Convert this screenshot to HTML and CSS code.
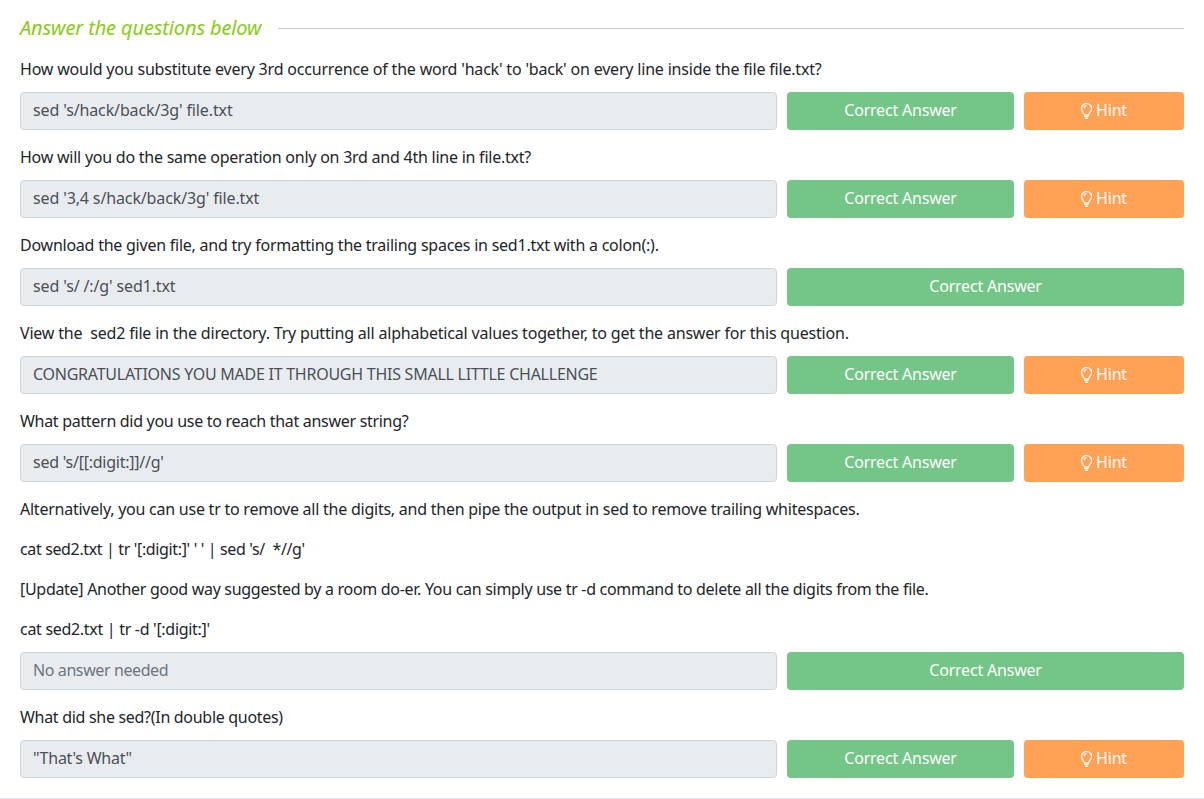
FILE: index.html
```html
<!DOCTYPE html>
<html lang="en">
<head>
    <meta charset="UTF-8">
    <title>Answer the questions below</title>
    <link rel="stylesheet" href="styles.css">
</head>
<body>

<div class="container">
    <div class="heading">
        <h5 class="heading-text">Answer the questions below</h5>
        <div class="heading-line"></div>
    </div>

    <p class="long">How would you substitute every 3rd occurrence of the word 'hack' to 'back' on every line inside the file file.txt?</p>
    <div class="row">
        <div class="answer">sed 's/hack/back/3g' file.txt</div>
        <div class="btn correct">Correct Answer</div>
        <div class="btn hint">
            <svg class="bulb" viewBox="0 0 11 16"><path d="M3.5 12.2c0-1.8-3-3.6-3-6.7a5 5 0 0 1 10 0c0 3.100-3 4.900-3 6.700zM3.500 13.700h4M4 15.300h3M3 5.200a2.500 2.500 0 0 1 2.500-2.500"/></svg>
            Hint
        </div>
    </div>

    <p>How will you do the same operation only on 3rd and 4th line in file.txt?</p>
    <div class="row">
        <div class="answer">sed '3,4 s/hack/back/3g' file.txt</div>
        <div class="btn correct">Correct Answer</div>
        <div class="btn hint">
            <svg class="bulb" viewBox="0 0 11 16"><path d="M3.5 12.2c0-1.8-3-3.6-3-6.7a5 5 0 0 1 10 0c0 3.100-3 4.900-3 6.700zM3.500 13.700h4M4 15.300h3M3 5.200a2.500 2.500 0 0 1 2.500-2.500"/></svg>
            Hint
        </div>
    </div>

    <p>Download the given file, and try formatting the trailing spaces in sed1.txt with a colon(:).</p>
    <div class="row">
        <div class="answer">sed 's/ /:/g' sed1.txt</div>
        <div class="btn correct wide">Correct Answer</div>
    </div>

    <p class="long">View the&nbsp; sed2 file in the directory. Try putting all alphabetical values together, to get the answer for this question.</p>
    <div class="row">
        <div class="answer caps">CONGRATULATIONS YOU MADE IT THROUGH THIS SMALL LITTLE CHALLENGE</div>
        <div class="btn correct">Correct Answer</div>
        <div class="btn hint">
            <svg class="bulb" viewBox="0 0 11 16"><path d="M3.5 12.2c0-1.8-3-3.6-3-6.7a5 5 0 0 1 10 0c0 3.100-3 4.900-3 6.700zM3.500 13.700h4M4 15.300h3M3 5.200a2.500 2.500 0 0 1 2.500-2.500"/></svg>
            Hint
        </div>
    </div>

    <p class="short">What pattern did you use to reach that answer string?</p>
    <div class="row">
        <div class="answer caps">sed 's/[[:digit:]]//g'</div>
        <div class="btn correct">Correct Answer</div>
        <div class="btn hint">
            <svg class="bulb" viewBox="0 0 11 16"><path d="M3.5 12.2c0-1.8-3-3.6-3-6.7a5 5 0 0 1 10 0c0 3.100-3 4.900-3 6.700zM3.500 13.700h4M4 15.300h3M3 5.200a2.500 2.500 0 0 1 2.500-2.500"/></svg>
            Hint
        </div>
    </div>

    <p>Alternatively, you can use tr to remove all the digits, and then pipe the output in sed to remove trailing whitespaces.</p>
    <p class="code">cat sed2.txt | tr '[:digit:]' ' ' | sed 's/&nbsp; *//g'</p>
    <p class="short">[Update] Another good way suggested by a room do-er. You can simply use tr -d command to delete all the digits from the file.</p>
    <p class="short">cat sed2.txt | tr -d '[:digit:]'</p>
    <div class="row">
        <div class="answer placeholder">No answer needed</div>
        <div class="btn correct wide">Correct Answer</div>
    </div>

    <p class="short">What did she sed?(In double quotes)</p>
    <div class="row">
        <div class="answer caps">"That's What"</div>
        <div class="btn correct">Correct Answer</div>
        <div class="btn hint">
            <svg class="bulb" viewBox="0 0 11 16"><path d="M3.5 12.2c0-1.8-3-3.6-3-6.7a5 5 0 0 1 10 0c0 3.100-3 4.900-3 6.700zM3.500 13.700h4M4 15.300h3M3 5.200a2.500 2.500 0 0 1 2.500-2.500"/></svg>
            Hint
        </div>
    </div>
</div>

</body>
</html>
```

FILE: styles.css
```css
html, body, h5, p {
    margin: 0;
    padding: 0;
}
body {
    font-family: "Noto Sans", "Open Sans", sans-serif;
    font-size: 16px;
    line-height: 24px;
    color: #212529;
    background-color: #fff;
    overflow: hidden;
}
.container {
    height: 799px;
    box-sizing: border-box;
    padding: 16px 20px 0;
    border-bottom: 1px solid #dee2e6;
}
.heading {
    display: flex;
    align-items: center;
    gap: 17px;
    height: 24px;
    margin-bottom: 17px;
}
.heading-text {
    font-size: 20px;
    font-style: italic;
    font-weight: 400;
    letter-spacing: -0.13px;
    color: #88cc14;
    white-space: nowrap;
}
.heading-line {
    flex: 1;
    height: 1px;
    background-color: #ccc;
}
p {
    margin-bottom: 16px;
    letter-spacing: -0.24px;
}
p.long {
    letter-spacing: -0.19px;
}
p.short {
    letter-spacing: -0.3px;
}
p.code {
    letter-spacing: -0.36px;
}
.row {
    display: flex;
    gap: 10px;
    height: 38px;
    margin-top: -5px;
    margin-bottom: 15px;
}
.answer {
    flex: 1;
    box-sizing: border-box;
    padding: 5px 12px;
    background-color: #e9ecef;
    border: 1px solid #ced4da;
    border-radius: 4px;
    color: #495057;
    letter-spacing: -0.13px;
}
.caps {
    letter-spacing: -0.25px;
}
.placeholder {
    color: #6c757d;
    letter-spacing: -0.4px;
}
.btn {
    display: flex;
    align-items: center;
    justify-content: center;
    box-sizing: border-box;
    padding-bottom: 2px;
    border-radius: 4px;
    color: #fff;
    letter-spacing: -0.2px;
}
.correct {
    width: 227px;
    background-color: #74c687;
}
.wide {
    width: 397px;
}
.hint {
    width: 160px;
    gap: 4px;
    background-color: #ffa256;
}
.bulb {
    width: 11px;
    height: 16px;
    margin-top: 2px;
    fill: none;
    stroke: #fff;
    stroke-width: 1.2;
}
```
